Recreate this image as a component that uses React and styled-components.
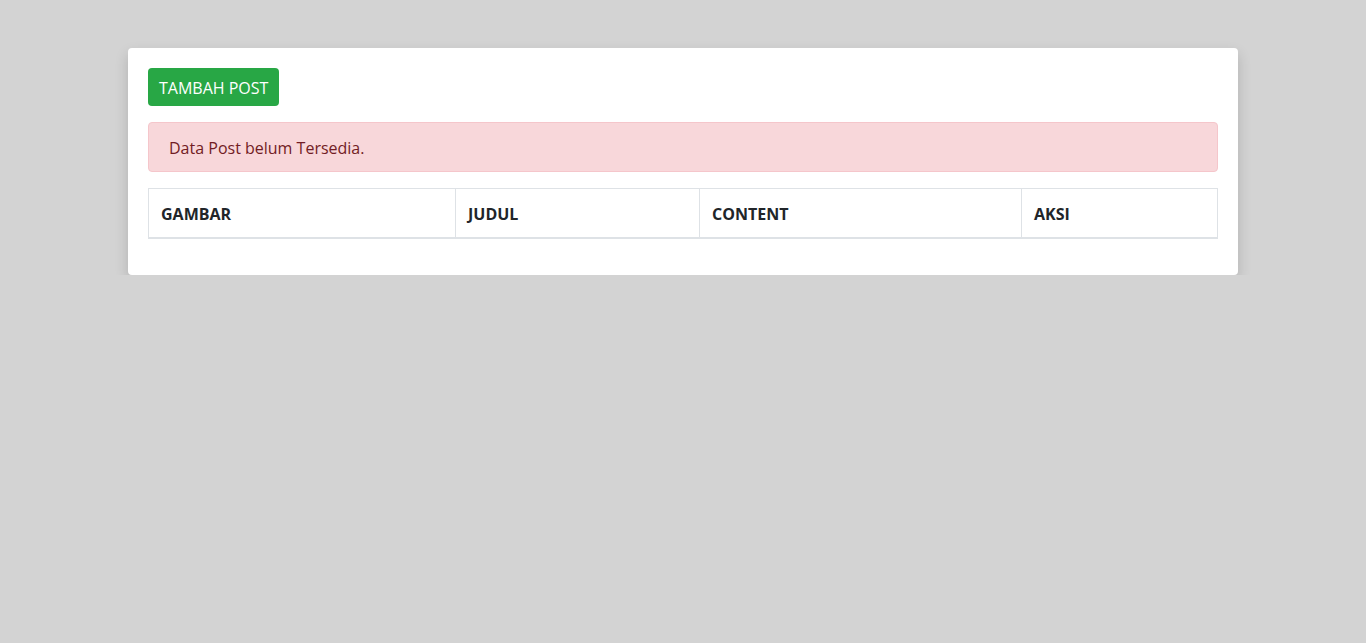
import React from "react";
import styled, { createGlobalStyle } from "styled-components";

const GlobalStyle = createGlobalStyle`
  body {
    margin: 0;
    background: #d3d3d3;
    font-family: "Open Sans", "Liberation Sans", sans-serif;
    font-size: 16px;
    line-height: 1.5;
    color: #212529;
  }
`;

const Container = styled.div`
  width: 1110px;
  margin: 48px auto 0;
`;

const Card = styled.div`
  background: #fff;
  border-radius: 4px;
  box-shadow: 0 6px 14px rgba(0, 0, 0, 0.16);
  padding: 20px;
`;

const Button = styled.button`
  display: inline-block;
  font-family: inherit;
  font-size: 16px;
  line-height: 24px;
  padding: 8px 11px 6px;
  color: #fff;
  background: #28a745;
  border: 0;
  border-radius: 4px;
  margin-bottom: 16px;
  cursor: pointer;
`;

const Alert = styled.div`
  padding: 13px 20px 11px;
  margin-bottom: 16px;
  color: #721c24;
  background: #f8d7da;
  border: 1px solid #f5c6cb;
  border-radius: 4px;
`;

const Table = styled.table`
  width: 100%;
  table-layout: fixed;
  border-collapse: collapse;
  margin-bottom: 16px;
  border: 1px solid #dee2e6;
`;

const Col = styled.col`
  width: ${(p) => p.$w}px;
`;

const Th = styled.th`
  text-align: left;
  padding: 13px 12px 11px;
  border: 1px solid #dee2e6;
  border-bottom-width: 2px;
  font-weight: 700;
`;

const columns = [
  ["GAMBAR", 307],
  ["JUDUL", 244],
  ["CONTENT", 322],
  ["AKSI", 196],
];

export default function App() {
  return (
    <>
      <GlobalStyle />
      <Container>
        <Card>
          <Button>TAMBAH POST</Button>
          <Alert>Data Post belum Tersedia.</Alert>
          <Table>
            <colgroup>
              {columns.map(([label, w]) => (
                <Col key={label} $w={w} />
              ))}
            </colgroup>
            <thead>
              <tr>
                {columns.map(([label]) => (
                  <Th key={label}>{label}</Th>
                ))}
              </tr>
            </thead>
            <tbody />
          </Table>
        </Card>
      </Container>
    </>
  );
}
